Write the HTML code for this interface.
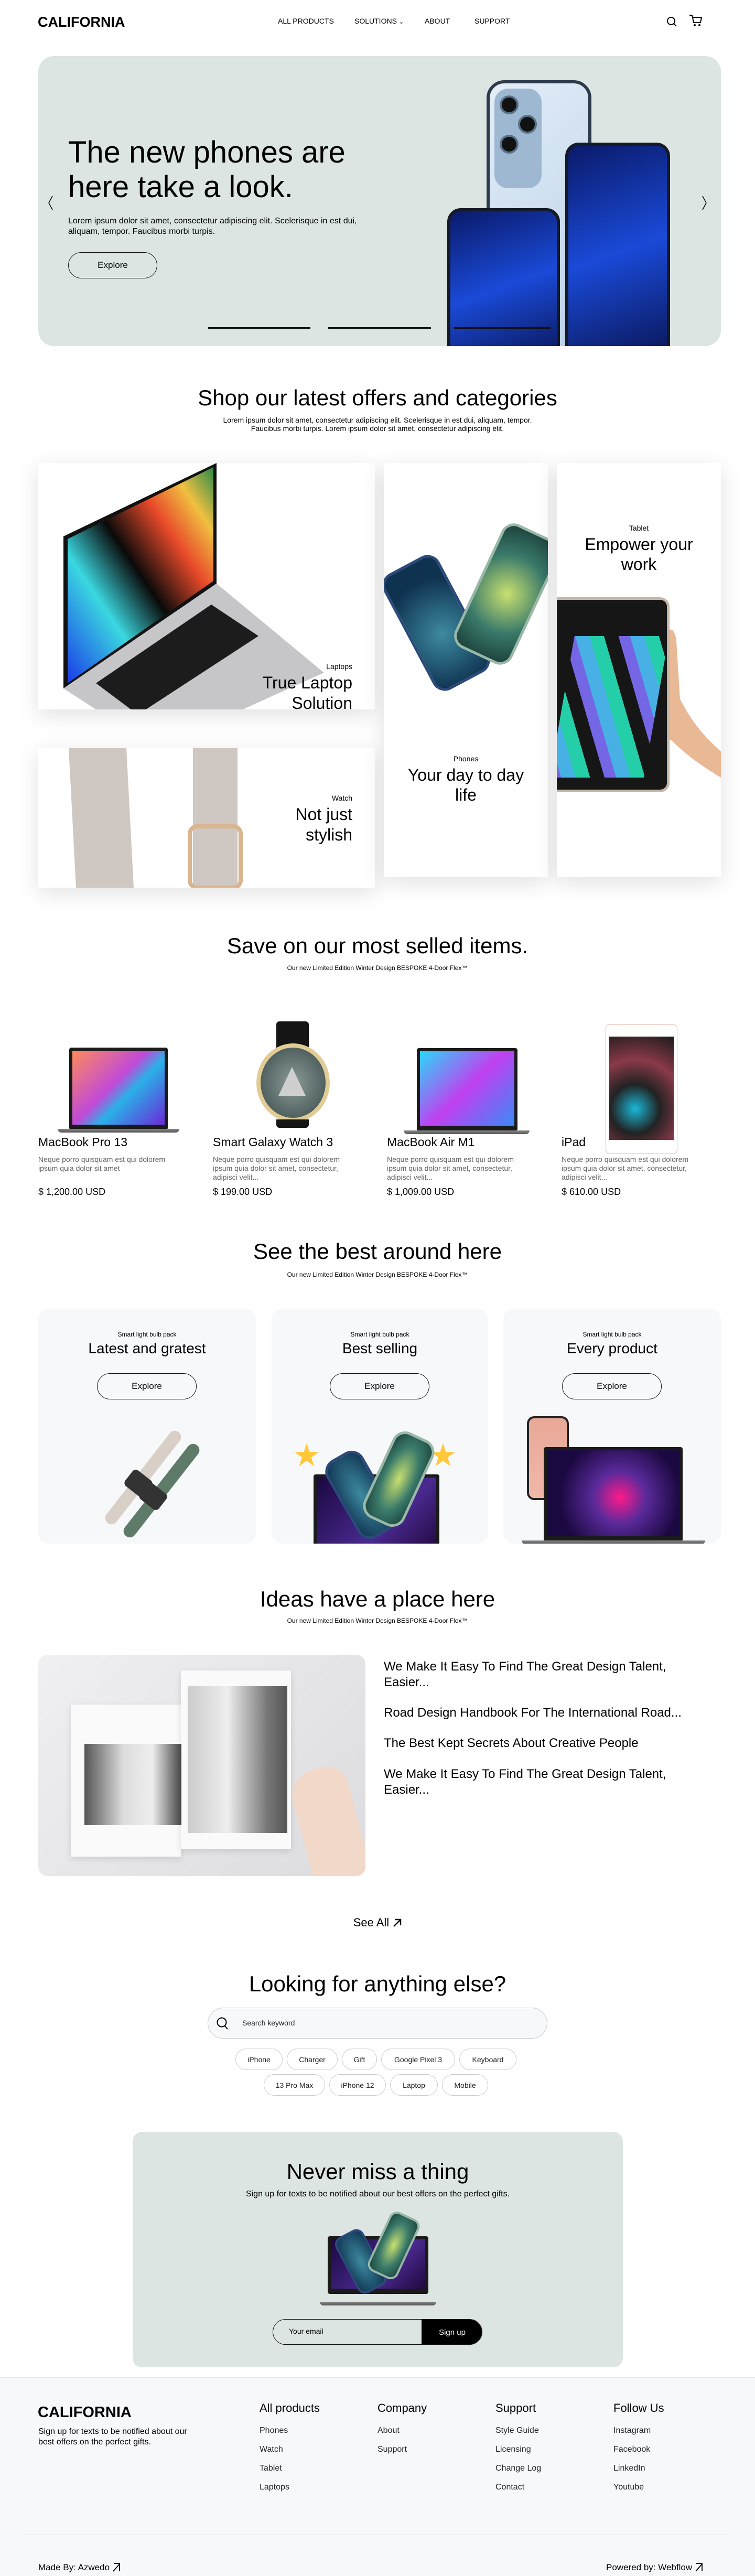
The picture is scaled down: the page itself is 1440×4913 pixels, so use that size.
<!DOCTYPE html>
<html><head><meta charset="utf-8">
<style>
*{margin:0;padding:0;box-sizing:border-box}
body{width:1440px;height:4913px;position:relative;background:#fff;font-family:"Liberation Sans",sans-serif;color:#000;overflow:hidden}
.a{position:absolute}
.c{text-align:center}
.btn{position:absolute;border:1.5px solid #111;border-radius:30px;display:flex;align-items:center;justify-content:center;font-size:17px}
.shadow{box-shadow:0 10px 40px rgba(0,0,0,.12)}
.scr{position:absolute;border-radius:4px;border:6px solid #1a1a1a;border-bottom-width:10px}
.base{position:absolute;height:7px;background:linear-gradient(#888,#555);border-radius:0 0 12px 12px}
.tag{position:absolute;height:41px;border:1px solid #ccc;border-radius:22px;font-size:14px;display:flex;align-items:center;justify-content:center;color:#222}
.fh{position:absolute;font-size:22px}
.fl{position:absolute;font-size:16px;color:#222}
.pname{position:absolute;font-size:23px}
.pdesc{position:absolute;font-size:14px;color:#666;line-height:17px;width:300px}
.pprice{position:absolute;font-size:18px}
.phone{position:absolute;border-radius:26px;border:5px solid #111}
.h2{position:absolute;left:0;width:1440px;text-align:center;font-size:42px}
</style></head><body>

<!-- NAV -->
<div class="a" style="left:72px;top:27px;font-size:27px;font-weight:bold">CALIFORNIA</div>
<div class="a" style="left:530px;top:32px;font-size:14px">ALL PRODUCTS</div>
<div class="a" style="left:676px;top:32px;font-size:14px">SOLUTIONS <span style="font-size:11px">&#8964;</span></div>
<div class="a" style="left:810px;top:32px;font-size:14px">ABOUT</div>
<div class="a" style="left:905px;top:32px;font-size:14px">SUPPORT</div>
<svg class="a" style="left:1270px;top:30px" width="24" height="22" viewBox="0 0 24 22"><circle cx="10" cy="10" r="7" fill="none" stroke="#000" stroke-width="2"/><path d="M15 15l5 5" stroke="#000" stroke-width="2"/></svg>
<svg class="a" style="left:1313px;top:27px" width="28" height="25" viewBox="0 0 28 25"><path d="M2 2h5l3 14h13l2-10H9" fill="none" stroke="#000" stroke-width="2"/><circle cx="12" cy="21" r="2"/><circle cx="21" cy="21" r="2"/></svg>

<!-- HERO -->
<div class="a" style="left:73px;top:107px;width:1302px;height:553px;background:#dce5e2;border-radius:30px;overflow:hidden">
  <div class="a" style="left:855px;top:46px;width:200px;height:520px;border-radius:34px;background:linear-gradient(135deg,#e4eef8,#b9d0e6);border:6px solid #2c3a4c"></div>
  <div class="a" style="left:870px;top:62px;width:90px;height:190px;border-radius:26px;background:#9eb8d2"></div>
  <div class="a" style="left:880px;top:75px;width:36px;height:36px;border-radius:50%;background:#111;border:4px solid #5a6f88"></div>
  <div class="a" style="left:915px;top:112px;width:36px;height:36px;border-radius:50%;background:#111;border:4px solid #5a6f88"></div>
  <div class="a" style="left:880px;top:150px;width:36px;height:36px;border-radius:50%;background:#111;border:4px solid #5a6f88"></div>
  <div class="phone" style="left:1005px;top:165px;width:200px;height:420px;background:linear-gradient(160deg,#0a1a6a,#1a4ad8 50%,#0a1555);border-color:#141a28;border-width:6px"></div>
  <div class="phone" style="left:780px;top:290px;width:215px;height:300px;background:linear-gradient(160deg,#0a1a6a,#1a4ad8 50%,#0a1555);border-color:#141a28;border-width:6px"></div>
</div>
<div class="a" style="left:130px;top:258px;font-size:58px;line-height:66px;width:640px">The new phones are here take a look.</div>
<div class="a" style="left:130px;top:412px;font-size:16px;line-height:20px;width:580px">Lorem ipsum dolor sit amet, consectetur adipiscing elit. Scelerisque in est dui, aliquam, tempor. Faucibus morbi turpis.</div>
<div class="btn" style="left:130px;top:481px;width:170px;height:50px">Explore</div>
<svg class="a" style="left:90px;top:372px" width="12" height="30" viewBox="0 0 12 30"><path d="M10 2L3 15l7 13" fill="none" stroke="#000" stroke-width="1.5"/></svg>
<svg class="a" style="left:1338px;top:372px" width="12" height="30" viewBox="0 0 12 30"><path d="M2 2l7 13-7 13" fill="none" stroke="#000" stroke-width="1.5"/></svg>
<div class="a" style="left:397px;top:624px;width:195px;height:3px;background:#111"></div>
<div class="a" style="left:626px;top:624px;width:196px;height:3px;background:#111"></div>
<div class="a" style="left:866px;top:624px;width:184px;height:3px;background:#111"></div>

<!-- CATEGORIES -->
<div class="h2" style="top:735px">Shop our latest offers and categories</div>
<div class="a c" style="left:420px;top:793px;width:600px;font-size:14px;line-height:16px">Lorem ipsum dolor sit amet, consectetur adipiscing elit. Scelerisque in est dui, aliquam, tempor. Faucibus morbi turpis. Lorem ipsum dolor sit amet, consectetur adipiscing elit.</div>

<div class="a shadow" style="left:73px;top:883px;width:642px;height:470px;background:#fff;overflow:hidden">
  <svg class="a" style="left:0;top:0" width="642" height="470" viewBox="0 0 642 470">
    <defs><linearGradient id="lg" x1="0" y1="1" x2="1" y2="0"><stop offset="0" stop-color="#1a3ae8"/><stop offset=".3" stop-color="#3ad8e0"/><stop offset=".5" stop-color="#0a0a0a"/><stop offset=".7" stop-color="#e84a2a"/><stop offset=".85" stop-color="#f0c040"/><stop offset="1" stop-color="#2a8a4a"/></linearGradient></defs>
    <polygon points="48,140 340,0 340,230 48,430" fill="#111"/>
    <polygon points="56,145 334,8 334,225 56,420" fill="url(#lg)"/>
    <polygon points="48,430 340,230 545,400 390,470 110,470" fill="#c6c6c8"/>
    <polygon points="110,420 330,270 420,330 190,480" fill="#1c1c1c"/>
  </svg>
  <div class="a" style="right:43px;top:380px;font-size:14px;text-align:right">Laptops</div>
  <div class="a" style="right:43px;top:400px;font-size:32px;line-height:39px;text-align:right">True Laptop<br>Solution</div>
</div>
<div class="a shadow" style="left:73px;top:1427px;width:642px;height:266px;background:#fff;overflow:hidden">
  <div class="a" style="left:65px;top:0;width:110px;height:266px;background:#cfc8c2;transform:skewX(3deg)"></div>
  <div class="a" style="left:295px;top:0;width:85px;height:266px;background:#cfc8c2"></div>
  <div class="a" style="left:285px;top:145px;width:105px;height:125px;border:8px solid #d9b48f;border-radius:18px"></div>
  <div class="a" style="right:43px;top:87px;font-size:14px;text-align:right">Watch</div>
  <div class="a" style="right:43px;top:107px;font-size:32px;line-height:39px;text-align:right">Not just<br>stylish</div>
</div>
<div class="a shadow" style="left:732px;top:883px;width:313px;height:790px;background:#fff;overflow:hidden">
  <div class="phone" style="left:40px;top:180px;width:120px;height:250px;transform:rotate(-28deg);background:radial-gradient(circle at 50% 60%,#3d8aa0,#0f3250 70%);border-color:#2b4a7a"></div>
  <div class="phone" style="left:175px;top:120px;width:120px;height:260px;transform:rotate(25deg);background:radial-gradient(circle at 50% 50%,#c8e070,#3a7a6a 55%,#1a3f3a);border-color:#9ab8a8"></div>
  <div class="a c" style="left:0;top:556px;width:313px;font-size:14px">Phones</div>
  <div class="a c" style="left:0;top:576px;width:313px;font-size:32px;line-height:38px">Your day to day<br>life</div>
</div>
<div class="a shadow" style="left:1062px;top:883px;width:313px;height:790px;background:#fff;overflow:hidden">
  <div class="a c" style="left:0;top:116px;width:313px;font-size:14px">Tablet</div>
  <div class="a c" style="left:0;top:136px;width:313px;font-size:32px;line-height:38px">Empower your<br>work</div>
  <svg class="a" style="left:180px;top:300px" width="133" height="380" viewBox="0 0 133 380"><path d="M20 40 C30 10 45 10 48 40 L55 150 C80 200 110 230 133 250 L133 300 C100 280 70 260 40 230 L20 220 Z" fill="#e9b895"/></svg>
  <div class="a" style="left:0;top:256px;width:215px;height:372px;background:#161616;border-radius:0 18px 18px 0;border:5px solid #c6b6a6;border-left:0"></div>
  <div class="a" style="left:10px;top:330px;width:180px;height:270px;background:repeating-linear-gradient(65deg,#7a6af0 0 20px,#4ab8f0 20px 45px,#25d8b0 45px 70px,transparent 70px 95px);opacity:.95;transform:skewX(-10deg)"></div>
</div>

<!-- MOST SELLED -->
<div class="h2" style="top:1780px">Save on our most selled items.</div>
<div class="a c" style="left:0;top:1839px;width:1440px;font-size:12px">Our new Limited Edition Winter Design BESPOKE 4-Door Flex™</div>

<div class="scr" style="left:132px;top:1998px;width:188px;height:157px;background:linear-gradient(135deg,#ff8a5a,#c04ad8 45%,#2ab0e8 60%,#6a2ad8)"></div>
<div class="base" style="left:110px;top:2153px;width:232px"></div>

<div class="a" style="left:527px;top:1947px;width:62px;height:258px;background:#111;border-radius:6px;top:1947px;height:0"></div>
<div class="a" style="left:527px;top:1948px;width:62px;height:180px;background:#151515;border-radius:6px"></div>
<div class="a" style="left:489px;top:1990px;width:140px;height:150px;border-radius:50%;background:radial-gradient(#8a9a98,#3a4a48);border:8px solid #e2cc96"></div>
<div class="a" style="left:531px;top:2035px;width:0;height:0;border-left:26px solid transparent;border-right:26px solid transparent;border-bottom:55px solid #cfcfcf"></div>
<div class="a" style="left:527px;top:2135px;width:62px;height:16px;background:#151515;border-radius:0 0 6px 6px"></div>

<div class="scr" style="left:795px;top:1999px;width:192px;height:158px;background:linear-gradient(135deg,#2ad8f8,#c040f0 50%,#3a8af8)"></div>
<div class="base" style="left:770px;top:2156px;width:240px"></div>

<div class="a" style="left:1155px;top:1953px;width:137px;height:248px;border:1.5px solid #e6b8a8;border-radius:8px;background:#fff"></div>
<div class="a" style="left:1162px;top:1977px;width:123px;height:197px;background:radial-gradient(circle at 40% 70%,#1ab8d8 0,#222 30%,#8a3a48 60%,#1a1a1a)"></div>

<div class="pname" style="left:73px;top:2165px">MacBook Pro 13</div>
<div class="pname" style="left:406px;top:2165px">Smart Galaxy Watch 3</div>
<div class="pname" style="left:738px;top:2165px">MacBook Air M1</div>
<div class="pname" style="left:1071px;top:2165px">iPad</div>
<div class="pdesc" style="left:73px;top:2203px;width:270px">Neque porro quisquam est qui dolorem ipsum quia dolor sit amet</div>
<div class="pdesc" style="left:406px;top:2203px;width:275px">Neque porro quisquam est qui dolorem ipsum quia dolor sit amet, consectetur, adipisci velit...</div>
<div class="pdesc" style="left:738px;top:2203px;width:275px">Neque porro quisquam est qui dolorem ipsum quia dolor sit amet, consectetur, adipisci velit...</div>
<div class="pdesc" style="left:1071px;top:2203px;width:275px">Neque porro quisquam est qui dolorem ipsum quia dolor sit amet, consectetur, adipisci velit...</div>
<div class="pprice" style="left:73px;top:2263px">$ 1,200.00 USD</div>
<div class="pprice" style="left:406px;top:2263px">$ 199.00 USD</div>
<div class="pprice" style="left:738px;top:2263px">$ 1,009.00 USD</div>
<div class="pprice" style="left:1071px;top:2263px">$ 610.00 USD</div>

<!-- BEST AROUND -->
<div class="h2" style="top:2363px">See the best around here</div>
<div class="a c" style="left:0;top:2424px;width:1440px;font-size:12px">Our new Limited Edition Winter Design BESPOKE 4-Door Flex™</div>

<div class="a" style="left:73px;top:2496px;width:415px;height:448px;background:#f7f8fa;border-radius:20px;overflow:hidden">
  <div class="a c" style="left:0;top:42px;width:415px;font-size:12px">Smart light bulb pack</div>
  <div class="a c" style="left:0;top:60px;width:415px;font-size:28px">Latest and gratest</div>
  <div class="btn" style="left:112px;top:123px;width:190px;height:50px">Explore</div>
  <div class="a" style="left:90px;top:310px;width:220px;height:24px;background:#d8d0c6;border-radius:12px;transform:rotate(-52deg)"></div>
  <div class="a" style="left:125px;top:335px;width:220px;height:24px;background:#5e7a68;border-radius:12px;transform:rotate(-52deg)"></div>
  <div class="a" style="left:172px;top:310px;width:38px;height:46px;background:#333;border-radius:8px;transform:rotate(-52deg)"></div>
  <div class="a" style="left:200px;top:335px;width:38px;height:46px;background:#333;border-radius:8px;transform:rotate(-52deg)"></div>
</div>
<div class="a" style="left:518px;top:2496px;width:413px;height:448px;background:#f7f8fa;border-radius:20px;overflow:hidden">
  <div class="a c" style="left:0;top:42px;width:413px;font-size:12px">Smart light bulb pack</div>
  <div class="a c" style="left:0;top:60px;width:413px;font-size:28px">Best selling</div>
  <div class="btn" style="left:111px;top:123px;width:190px;height:50px">Explore</div>
  <div class="scr" style="left:80px;top:316px;width:240px;height:160px;background:linear-gradient(135deg,#1a0840,#4a2a90 60%,#20083e)"></div>
  <div class="base" style="left:65px;top:472px;width:280px"></div>
  <div class="a" style="left:40px;top:245px;font-size:60px;color:#ffc83a">★</div>
  <div class="a" style="left:300px;top:245px;font-size:60px;color:#ffc83a">★</div>
  <div class="phone" style="left:130px;top:270px;width:80px;height:170px;transform:rotate(-30deg);background:radial-gradient(#3d8aa0,#0f3250);border-color:#2b4a7a"></div>
  <div class="phone" style="left:200px;top:235px;width:85px;height:180px;transform:rotate(25deg);background:radial-gradient(#c8e070,#3a7a6a 55%,#1a3f3a);border-color:#9ab8a8"></div>
</div>
<div class="a" style="left:960px;top:2496px;width:415px;height:448px;background:#f7f8fa;border-radius:20px;overflow:hidden">
  <div class="a c" style="left:0;top:42px;width:415px;font-size:12px">Smart light bulb pack</div>
  <div class="a c" style="left:0;top:60px;width:415px;font-size:28px">Every product</div>
  <div class="btn" style="left:112px;top:123px;width:190px;height:50px">Explore</div>
  <div class="a" style="left:45px;top:205px;width:80px;height:160px;border-radius:14px;border:4px solid #222;background:linear-gradient(#e8a898,#f0b8a8)"></div>
  <div class="scr" style="left:77px;top:264px;width:265px;height:180px;background:radial-gradient(circle at 55% 55%,#ff1a8a 0,#5a2a9a 30%,#1a0840 70%)"></div>
  <div class="base" style="left:35px;top:442px;width:350px"></div>
</div>

<!-- IDEAS -->
<div class="h2" style="top:3026px">Ideas have a place here</div>
<div class="a c" style="left:0;top:3084px;width:1440px;font-size:12px">Our new Limited Edition Winter Design BESPOKE 4-Door Flex™</div>
<div class="a" style="left:73px;top:3156px;width:624px;height:422px;border-radius:18px;background:linear-gradient(135deg,#f0f0f2,#dcdcdf);overflow:hidden">
  <div class="a" style="left:62px;top:95px;width:210px;height:290px;background:#fafafa;box-shadow:0 4px 12px rgba(0,0,0,.12)"></div>
  <div class="a" style="left:272px;top:30px;width:210px;height:340px;background:#fafafa;box-shadow:0 4px 12px rgba(0,0,0,.12)"></div>
  <div class="a" style="left:88px;top:170px;width:185px;height:155px;background:linear-gradient(90deg,#555,#ddd 40%,#eee 70%,#444)"></div>
  <div class="a" style="left:285px;top:60px;width:190px;height:280px;background:linear-gradient(90deg,#ccc,#eee 40%,#777 80%,#555)"></div>
  <div class="a" style="left:500px;top:215px;width:110px;height:220px;background:#f2d8c8;border-radius:50px 40px 0 0;transform:rotate(-15deg)"></div>
</div>
<div class="a" style="left:732px;top:3164px;font-size:24px;line-height:30px;width:590px">We Make It Easy To Find The Great Design Talent, Easier...</div>
<div class="a" style="left:732px;top:3252px;font-size:24px;line-height:30px;width:680px">Road Design Handbook For The International Road...</div>
<div class="a" style="left:732px;top:3310px;font-size:24px;line-height:30px;width:640px">The Best Kept Secrets About Creative People</div>
<div class="a" style="left:732px;top:3369px;font-size:24px;line-height:30px;width:590px">We Make It Easy To Find The Great Design Talent, Easier...</div>
<div class="a c" style="left:0;top:3654px;width:1440px;font-size:22px">See All <svg width="18" height="18" viewBox="0 0 18 18" style="vertical-align:-2px"><path d="M3 16L15 4M5 3h11v11" fill="none" stroke="#000" stroke-width="2.5"/></svg></div>

<!-- SEARCH -->
<div class="h2" style="top:3760px">Looking for anything else?</div>
<div class="a" style="left:396px;top:3829px;width:648px;height:59px;border:1px solid #c8c8c8;border-radius:30px;background:#f7f8fa"></div>
<svg class="a" style="left:412px;top:3846px" width="24" height="26" viewBox="0 0 24 26"><circle cx="11" cy="11" r="8.5" fill="none" stroke="#000" stroke-width="2"/><path d="M17 18l5 6" stroke="#000" stroke-width="2"/></svg>
<div class="a" style="left:462px;top:3850px;font-size:14px;color:#222">Search keyword</div>
<div class="tag" style="left:449px;top:3907px;width:90px">iPhone</div>
<div class="tag" style="left:547px;top:3907px;width:97px">Charger</div>
<div class="tag" style="left:652px;top:3907px;width:67px">Gift</div>
<div class="tag" style="left:727px;top:3907px;width:141px">Google Pixel 3</div>
<div class="tag" style="left:876px;top:3907px;width:109px">Keyboard</div>
<div class="tag" style="left:503px;top:3956px;width:117px">13 Pro Max</div>
<div class="tag" style="left:628px;top:3956px;width:108px">iPhone 12</div>
<div class="tag" style="left:744px;top:3956px;width:91px">Laptop</div>
<div class="tag" style="left:843px;top:3956px;width:88px">Mobile</div>

<!-- NEWSLETTER -->
<div class="a" style="left:253px;top:4066px;width:935px;height:449px;background:#dce5e2;border-radius:18px"></div>
<div class="a c" style="left:253px;top:4118px;width:935px;font-size:42px">Never miss a thing</div>
<div class="a c" style="left:253px;top:4176px;width:935px;font-size:16px">Sign up for texts to be notified about our best offers on the perfect gifts.</div>
<div class="scr" style="left:625px;top:4265px;width:192px;height:110px;background:linear-gradient(135deg,#1a0840,#4a2a90 60%,#20083e)"></div>
<div class="base" style="left:610px;top:4390px;width:222px"></div>
<div class="phone" style="left:658px;top:4253px;width:60px;height:120px;transform:rotate(-28deg);background:radial-gradient(#3d8aa0,#0f3250);border-color:#2b4a7a;border-width:4px;border-radius:16px"></div>
<div class="phone" style="left:720px;top:4220px;width:62px;height:125px;transform:rotate(25deg);background:radial-gradient(#c8e070,#3a7a6a 55%,#1a3f3a);border-color:#9ab8a8;border-width:4px;border-radius:16px"></div>
<div class="a" style="left:520px;top:4423px;width:400px;height:49px;border:1.5px solid #111;border-radius:25px;overflow:hidden;background:#dce5e2">
  <div class="a" style="left:30px;top:14px;font-size:14px">Your email</div>
  <div class="a" style="left:283px;top:0;width:117px;height:49px;background:#000;color:#fff;font-size:15px;display:flex;align-items:center;justify-content:center">Sign up</div>
</div>

<!-- FOOTER -->
<div class="a" style="left:0;top:4534px;width:1440px;height:379px;background:#f7f8fa;border-top:1.5px solid #e2e4e6"></div>
<div class="a" style="left:72px;top:4585px;font-size:29px;font-weight:bold">CALIFORNIA</div>
<div class="a" style="left:73px;top:4628px;font-size:16px;line-height:20px;width:300px">Sign up for texts to be notified about our best offers on the perfect gifts.</div>
<div class="fh" style="left:495px;top:4580px">All products</div>
<div class="fh" style="left:720px;top:4580px">Company</div>
<div class="fh" style="left:945px;top:4580px">Support</div>
<div class="fh" style="left:1170px;top:4580px">Follow Us</div>
<div class="fl" style="left:495px;top:4627px">Phones</div>
<div class="fl" style="left:495px;top:4663px">Watch</div>
<div class="fl" style="left:495px;top:4699px">Tablet</div>
<div class="fl" style="left:495px;top:4735px">Laptops</div>
<div class="fl" style="left:720px;top:4627px">About</div>
<div class="fl" style="left:720px;top:4663px">Support</div>
<div class="fl" style="left:945px;top:4627px">Style Guide</div>
<div class="fl" style="left:945px;top:4663px">Licensing</div>
<div class="fl" style="left:945px;top:4699px">Change Log</div>
<div class="fl" style="left:945px;top:4735px">Contact</div>
<div class="fl" style="left:1170px;top:4627px">Instagram</div>
<div class="fl" style="left:1170px;top:4663px">Facebook</div>
<div class="fl" style="left:1170px;top:4699px">LinkedIn</div>
<div class="fl" style="left:1170px;top:4735px">Youtube</div>
<div class="a" style="left:45px;top:4834px;width:1350px;height:1px;background:#e0e2e4"></div>
<div class="a" style="left:73px;top:4887px;font-size:17px">Made By: Azwedo <svg width="16" height="18" viewBox="0 0 16 18" style="vertical-align:-3px"><path d="M2 17L14 3M3 2h11v15" fill="none" stroke="#000" stroke-width="1.8"/></svg></div>
<div class="a" style="left:1156px;top:4887px;font-size:17px">Powered by: Webflow <svg width="16" height="18" viewBox="0 0 16 18" style="vertical-align:-3px"><path d="M2 17L14 3M3 2h11v15" fill="none" stroke="#000" stroke-width="1.8"/></svg></div>

</body></html>
